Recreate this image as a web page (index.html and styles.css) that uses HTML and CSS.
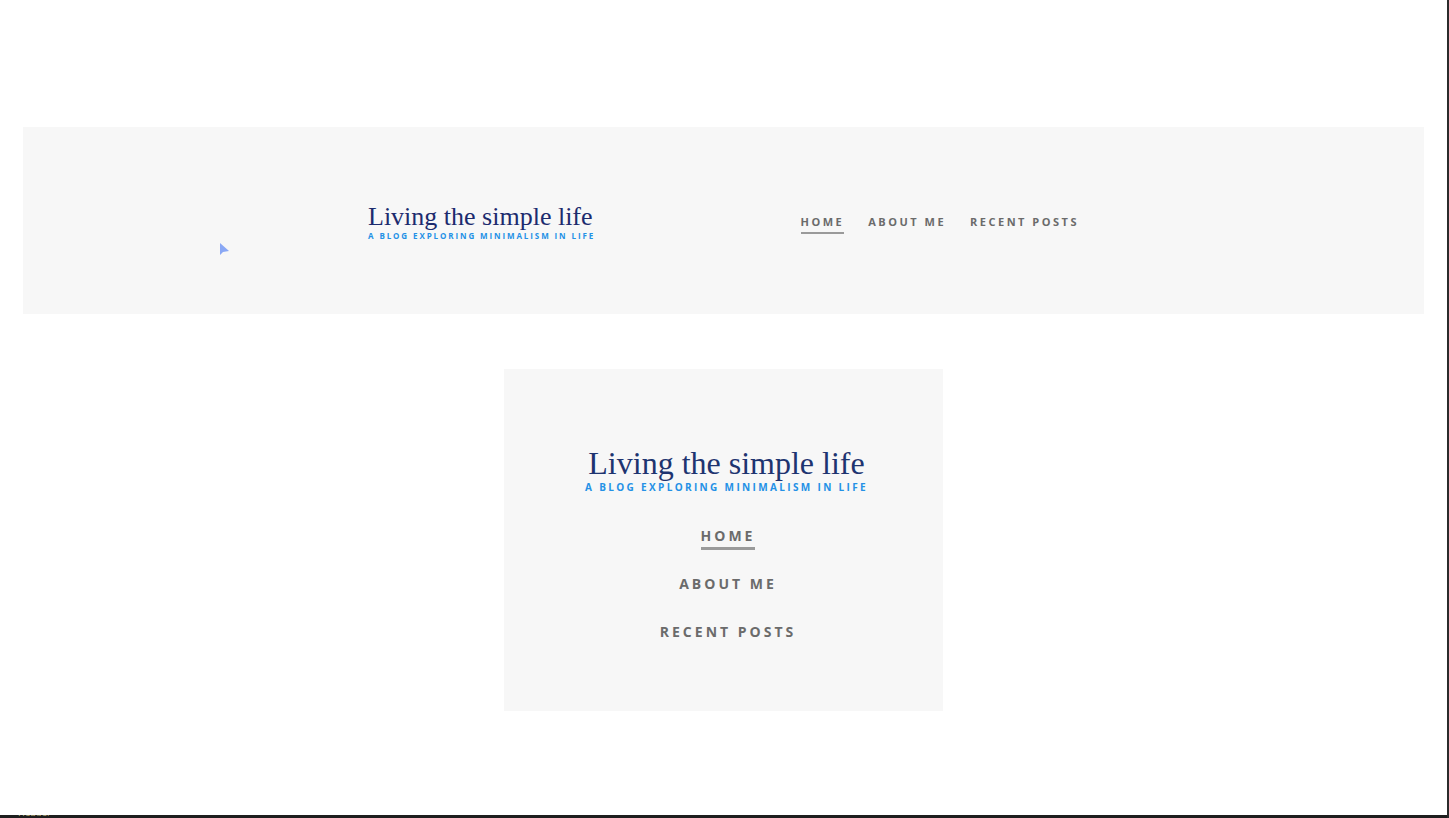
FILE: index.html
```html
<!DOCTYPE html>
<html lang="en">
<head>
<meta charset="utf-8">
<title>Living the simple life</title>
<link rel="stylesheet" href="styles.css">
</head>
<body>
<div class="frame">
  <div class="canvas">
    <section class="header-wide">
      <div class="header-inner">
        <div class="logo">
          <div class="logo-title">Living the simple life</div>
          <div class="logo-tag">A blog exploring minimalism in life</div>
        </div>
        <nav class="nav-row">
          <a class="nav-link active">Home</a>
          <a class="nav-link">About me</a>
          <a class="nav-link">Recent posts</a>
        </nav>
      </div>
      <svg class="cursor" width="10" height="13" viewBox="0 0 10 13"><path d="M0 0 L0 12 L3 9 L9 8 Z" fill="#8aa8f5"/></svg>
    </section>
    <section class="header-narrow">
      <div class="logo logo-center">
        <div class="logo-title big">Living the simple life</div>
        <div class="logo-tag big">A blog exploring minimalism in life</div>
      </div>
      <nav class="nav-col">
        <a class="nav-link lg active">Home</a>
        <a class="nav-link lg">About me</a>
        <a class="nav-link lg">Recent posts</a>
      </nav>
    </section>
  </div>
  <div class="statusbar"><span class="status-text">Header</span></div>
</div>
</body>
</html>
```
FILE: styles.css
```css
html, body {
  margin: 0;
  padding: 0;
  background: #ffffff;
  height: 100%;
  overflow: hidden;
}
.frame {
  width: 1449px;
  height: 818px;
  display: flex;
  flex-direction: column;
  box-sizing: border-box;
  border-right: 2px solid #2b2b2b;
}
.canvas {
  flex: 1;
  display: flex;
  flex-direction: column;
  align-items: center;
  padding: 127px 23px 0;
  background: #ffffff;
}
.header-wide {
  position: relative;
  align-self: stretch;
  height: 187px;
  background: #f7f7f7;
  display: flex;
  justify-content: center;
  align-items: center;
}
.header-inner {
  width: 711px;
  display: flex;
  justify-content: space-between;
  align-items: center;
  margin-top: 4px;
}
.logo {
  display: flex;
  flex-direction: column;
}
.logo-center { align-items: center; }
.logo-title {
  font-family: "Liberation Serif", "DejaVu Serif", serif;
  font-size: 26px;
  line-height: 26px;
  color: #1c2b6e;
  white-space: nowrap;
}
.logo-title.big {
  font-size: 32px;
  line-height: 32px;
  color: #1e3470;
}
.logo-tag {
  font-family: "Open Sans", "Liberation Sans", sans-serif;
  font-weight: 700;
  font-size: 8px;
  line-height: 10px;
  letter-spacing: 1.9px;
  text-transform: uppercase;
  color: #2491e6;
  white-space: nowrap;
  margin-top: 1px;
}
.logo-tag.big {
  font-size: 10px;
  line-height: 12px;
  letter-spacing: 2.35px;
  margin-top: 2px;
}
.nav-row {
  display: flex;
  gap: 24px;
  margin-top: 2px;
}
.nav-link {
  font-family: "Open Sans", "Liberation Sans", sans-serif;
  font-weight: 700;
  font-size: 11px;
  line-height: 16px;
  letter-spacing: 2.5px;
  text-transform: uppercase;
  color: #6b6b6b;
  padding-bottom: 2px;
  border-bottom: 2px solid transparent;
}
.nav-link.active { border-bottom-color: #9a9a9a; }
.header-narrow {
  margin-top: 55px;
  width: 439px;
  height: 342px;
  background: #f7f7f7;
  display: flex;
  flex-direction: column;
  align-items: center;
  box-sizing: border-box;
  padding-top: 78px;
  padding-left: 6px;
}
.nav-col {
  margin-top: 33px;
  display: flex;
  flex-direction: column;
  align-items: center;
  gap: 24px;
}
.nav-link.lg {
  font-size: 14px;
  line-height: 20px;
  letter-spacing: 3px;
  padding-bottom: 1px;
  border-bottom-width: 3px;
  margin-left: 3px;
}
.cursor {
  position: absolute;
  left: 197px;
  top: 116px;
}
.statusbar {
  height: 3px;
  background: #1e1e1e;
  overflow: hidden;
  position: relative;
}
.status-text {
  position: absolute;
  left: 18px;
  top: -7px;
  font-family: "DejaVu Sans", sans-serif;
  font-size: 9px;
  color: #b8ad7a;
}
```
